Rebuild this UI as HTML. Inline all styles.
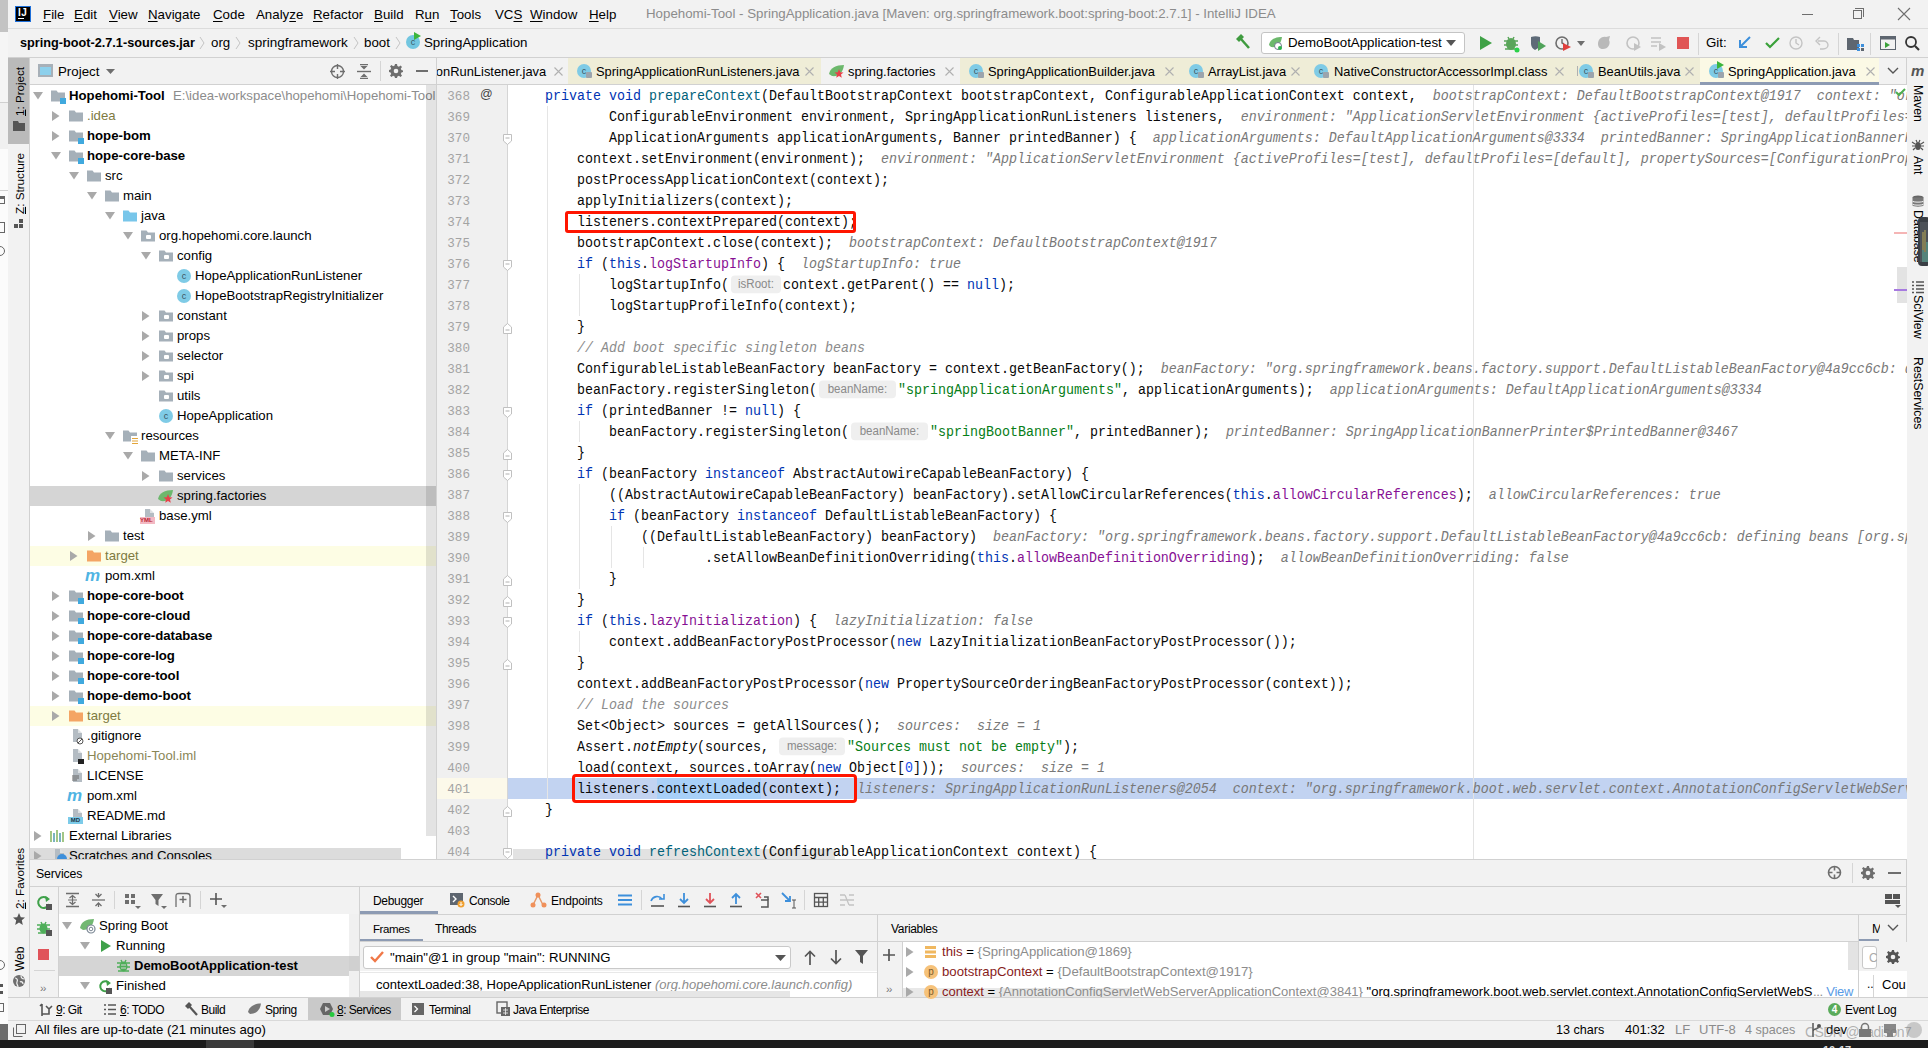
<!DOCTYPE html><html><head><meta charset="utf-8"><style>
*{margin:0;padding:0;box-sizing:border-box}
html,body{width:1928px;height:1048px;overflow:hidden;background:#f2f2f2}
body{position:relative;font-family:"Liberation Sans",sans-serif;font-size:13px;color:#000}
.t{position:absolute;white-space:pre;line-height:20px;height:20px}
.b{font-weight:bold}
.code{position:absolute;left:437px;top:85px;width:1470px;height:774px;overflow:hidden;background:#fff}
.ln{position:absolute;left:0;height:21px;width:1470px;white-space:pre;font-family:"Liberation Mono",monospace;font-size:13.333px;line-height:21px;color:#080808;transform:scaleY(1.1);transform-origin:0 6px}
.kw{color:#0033b3}
.mt{color:#00627a}
.fd{color:#871094}
.st{color:#067d17}
.cm{color:#8c8c8c;font-style:italic}
.nm{color:#1750eb}
.it{font-style:italic}
.hint{color:#787878;font-style:italic}
.inl{display:inline-block;vertical-align:top;height:15.5px;margin-top:2.4px;background:#efefef;border-radius:4px/3.6px;color:#8a8a8a;font-family:"Liberation Sans",sans-serif;font-size:11.5px;line-height:15.5px;font-style:normal;text-align:center}
svg{position:absolute;overflow:visible}
</style></head><body><div style="position:absolute;left:0px;top:0px;width:8px;height:32px;background:#c3c3c3"></div>
<div style="position:absolute;left:0px;top:32px;width:8px;height:1008px;background:#fbfbfb"></div>
<div style="position:absolute;left:0px;top:32px;width:8px;height:70px;background:#f5f5f5"></div>
<div style="position:absolute;left:0px;top:102px;width:8px;height:1px;background:#d0d0d0"></div>
<div style="position:absolute;left:0px;top:103px;width:8px;height:46px;background:#f0f0f0"></div>
<div style="position:absolute;left:0px;top:190px;width:8px;height:1px;background:#d0d0d0"></div>
<div style="position:absolute;left:-4px;top:196px;width:9px;height:8px;border:1.3px solid #666"></div>
<div style="position:absolute;left:-4px;top:197px;width:9px;height:2px;background:#666"></div>
<div style="position:absolute;left:-4px;top:222px;width:9px;height:11px;border:1.3px solid #666"></div>
<div style="position:absolute;left:-5px;top:246px;width:10px;height:10px;border:1.3px solid #666;border-radius:50%"></div>
<div style="position:absolute;left:-5px;top:960px;width:10px;height:10px;border:1.3px solid #666;border-radius:50%"></div>
<div style="position:absolute;left:-3px;top:984px;width:6px;height:3px;background:#555"></div>
<div style="position:absolute;left:-3px;top:991px;width:6px;height:3px;background:#555"></div>
<div style="position:absolute;left:-4px;top:1003px;width:8px;height:9px;border:1.3px solid #666"></div>
<div style="position:absolute;left:0px;top:1024px;width:8px;height:16px;background:#6b6b6b"></div>
<div style="position:absolute;left:8px;top:0px;width:1920px;height:28px;background:#f2f2f2"></div>
<div style="position:absolute;left:8px;top:28px;width:1920px;height:1px;background:#dcdcdc"></div>
<div style="position:absolute;left:8px;top:29px;width:1920px;height:28px;background:#f2f2f2"></div>
<div style="position:absolute;left:8px;top:57px;width:1920px;height:1px;background:#d1d1d1"></div>
<div style="position:absolute;left:8px;top:58px;width:21px;height:939px;background:#f2f2f2"></div>
<div style="position:absolute;left:29px;top:58px;width:1px;height:939px;background:#d1d1d1"></div>
<div style="position:absolute;left:8px;top:58px;width:21px;height:86px;background:#bababa"></div>
<div style="position:absolute;left:30px;top:58px;width:406px;height:26px;background:#f2f2f2"></div>
<div style="position:absolute;left:30px;top:84px;width:406px;height:1px;background:#d1d1d1"></div>
<div style="position:absolute;left:30px;top:85px;width:406px;height:774px;background:#ffffff"></div>
<div style="position:absolute;left:436px;top:58px;width:1px;height:801px;background:#d1d1d1"></div>
<div style="position:absolute;left:437px;top:58px;width:1470px;height:26px;background:#f2f2f2"></div>
<div style="position:absolute;left:437px;top:84px;width:1470px;height:1px;background:#d1d1d1"></div>
<div style="position:absolute;left:1907px;top:58px;width:21px;height:939px;background:#f2f2f2"></div>
<div style="position:absolute;left:1906px;top:58px;width:1px;height:939px;background:#d1d1d1"></div>
<div style="position:absolute;left:30px;top:859px;width:1876px;height:1px;background:#d1d1d1"></div>
<div style="position:absolute;left:30px;top:860px;width:1876px;height:26px;background:#f2f2f2"></div>
<div style="position:absolute;left:30px;top:886px;width:1876px;height:1px;background:#d1d1d1"></div>
<div style="position:absolute;left:8px;top:997px;width:1920px;height:1px;background:#d1d1d1"></div>
<div style="position:absolute;left:8px;top:998px;width:1920px;height:22px;background:#f2f2f2"></div>
<div style="position:absolute;left:8px;top:1020px;width:1920px;height:1px;background:#d9d9d9"></div>
<div style="position:absolute;left:8px;top:1021px;width:1920px;height:19px;background:#f2f2f2"></div>
<div style="position:absolute;left:0px;top:1040px;width:1928px;height:8px;background:#1c1c1c"></div>
<div style="position:absolute;left:206px;top:1040px;width:48px;height:8px;background:#3a3a3a"></div>
<div style="position:absolute;left:15px;top:6px;width:16px;height:16px;background:#000;border:1px solid #1e6fd9"></div>
<div style="position:absolute;left:18px;top:7px;font:bold 10px 'Liberation Sans';color:#fff;line-height:11px;letter-spacing:0.5px">IJ</div>
<div style="position:absolute;left:18px;top:18px;width:6px;height:1px;background:#fff"></div>
<div class="t" style="left:43px;top:5px;font-size:13.3px;color:#000"><u style="text-decoration-thickness:1px;text-underline-offset:2px">F</u>ile</div>
<div class="t" style="left:74px;top:5px;font-size:13.3px;color:#000"><u style="text-decoration-thickness:1px;text-underline-offset:2px">E</u>dit</div>
<div class="t" style="left:109px;top:5px;font-size:13.3px;color:#000"><u style="text-decoration-thickness:1px;text-underline-offset:2px">V</u>iew</div>
<div class="t" style="left:148px;top:5px;font-size:13.3px;color:#000"><u style="text-decoration-thickness:1px;text-underline-offset:2px">N</u>avigate</div>
<div class="t" style="left:213px;top:5px;font-size:13.3px;color:#000"><u style="text-decoration-thickness:1px;text-underline-offset:2px">C</u>ode</div>
<div class="t" style="left:256px;top:5px;font-size:13.3px;color:#000">Analy<u style="text-decoration-thickness:1px;text-underline-offset:2px">z</u>e</div>
<div class="t" style="left:313px;top:5px;font-size:13.3px;color:#000"><u style="text-decoration-thickness:1px;text-underline-offset:2px">R</u>efactor</div>
<div class="t" style="left:374px;top:5px;font-size:13.3px;color:#000"><u style="text-decoration-thickness:1px;text-underline-offset:2px">B</u>uild</div>
<div class="t" style="left:415px;top:5px;font-size:13.3px;color:#000">R<u style="text-decoration-thickness:1px;text-underline-offset:2px">u</u>n</div>
<div class="t" style="left:450px;top:5px;font-size:13.3px;color:#000"><u style="text-decoration-thickness:1px;text-underline-offset:2px">T</u>ools</div>
<div class="t" style="left:495px;top:5px;font-size:13.3px;color:#000">VC<u style="text-decoration-thickness:1px;text-underline-offset:2px">S</u></div>
<div class="t" style="left:530px;top:5px;font-size:13.3px;color:#000"><u style="text-decoration-thickness:1px;text-underline-offset:2px">W</u>indow</div>
<div class="t" style="left:589px;top:5px;font-size:13.3px;color:#000"><u style="text-decoration-thickness:1px;text-underline-offset:2px">H</u>elp</div>
<div class="t" style="left:646px;top:4px;font-size:13.3px;color:#8c8c8c">Hopehomi-Tool - SpringApplication.java [Maven: org.springframework.boot:spring-boot:2.7.1] - IntelliJ IDEA</div>
<div style="position:absolute;left:1802px;top:14px;width:11px;height:1px;background:#6e6e6e"></div>
<div style="position:absolute;left:1853px;top:10px;width:9px;height:9px;border:1px solid #6e6e6e"></div>
<div style="position:absolute;left:1855px;top:8px;width:9px;height:9px;border-top:1px solid #6e6e6e;border-right:1px solid #6e6e6e"></div>
<svg style="left:1898px;top:8px" width="12" height="12"><path d="M0 0L12 12M12 0L0 12" stroke="#6e6e6e" stroke-width="1.1"/></svg>
<div class="t" style="left:20px;top:33px;font-size:12.7px;font-weight:bold;color:#000">spring-boot-2.7.1-sources.jar</div>
<svg style="left:199px;top:36px" width="6" height="14"><path d="M1 1L5 7L1 13" stroke="#c4c4c4" fill="none" stroke-width="1"/></svg>
<div class="t" style="left:211px;top:33px;font-size:13.3px;color:#000">org</div>
<svg style="left:235px;top:36px" width="6" height="14"><path d="M1 1L5 7L1 13" stroke="#c4c4c4" fill="none" stroke-width="1"/></svg>
<div class="t" style="left:248px;top:33px;font-size:13.5px;color:#000">springframework</div>
<svg style="left:353px;top:36px" width="6" height="14"><path d="M1 1L5 7L1 13" stroke="#c4c4c4" fill="none" stroke-width="1"/></svg>
<div class="t" style="left:364px;top:33px;font-size:13.3px;color:#000">boot</div>
<svg style="left:395px;top:36px" width="6" height="14"><path d="M1 1L5 7L1 13" stroke="#c4c4c4" fill="none" stroke-width="1"/></svg>
<div style="position:absolute;left:406px;top:35px;width:14px;height:14px;border-radius:50%;background:#72c6e0;color:#3b5a66;font:9px 'Liberation Sans';line-height:14px;text-align:center">c</div>
<svg style="left:414px;top:32px" width="7" height="8"><path d="M0 0L7 4L0 8Z" fill="#3bb53b"/></svg>
<div class="t" style="left:424px;top:33px;font-size:13.3px;color:#000">SpringApplication</div>
<svg style="left:1234px;top:34px" width="18" height="16"><path d="M2 5L7 0L10 3L5 8Z" fill="#3f9b3f"/><path d="M7 5L15 14" stroke="#3f9b3f" stroke-width="2.5"/></svg>
<div style="position:absolute;left:1261px;top:32px;width:204px;height:22px;background:#fff;border:1px solid #c4c4c4;border-radius:3px"></div>
<svg style="left:1268px;top:36px" width="16" height="14"><path d="M1 9C2 3 8 1 14 1C13 8 9 12 3 11Z" fill="#6cb86c"/><circle cx="10" cy="10" r="3.5" fill="#fff" stroke="#6e7b8b" stroke-width="1"/><circle cx="12" cy="12" r="2" fill="#2bb24c"/></svg>
<div class="t" style="left:1288px;top:33px;font-size:13.3px;color:#000">DemoBootApplication-test</div>
<svg style="left:1446px;top:40px" width="10" height="6"><path d="M0 0L10 0L5 6Z" fill="#555"/></svg>
<svg style="left:1479px;top:36px" width="13" height="14"><path d="M1 0L13 7L1 14Z" fill="#3fa146"/></svg>
<svg style="left:1503px;top:35px" width="17" height="17"><ellipse cx="8" cy="9" rx="5" ry="6" fill="#5aa55a"/><path d="M1 6H15M1 10H15M2 14H14M5 2L6 4M11 2L10 4" stroke="#5aa55a" stroke-width="1.5"/><circle cx="14" cy="15" r="2.5" fill="#2bd14b"/></svg>
<svg style="left:1530px;top:35px" width="17" height="17"><path d="M1 2C4 1 7 1 10 2V9C10 12 7 14 5 15C3 14 1 12 1 9Z" fill="#5e6b78"/><path d="M8 6L16 11L8 16Z" fill="#4fa35a"/></svg>
<svg style="left:1555px;top:35px" width="18" height="17"><circle cx="7" cy="8" r="6" fill="none" stroke="#6e6e6e" stroke-width="1.6"/><path d="M7 4V8L9 9" stroke="#6e6e6e" stroke-width="1.4" fill="none"/><path d="M8 8L16 12L8 16Z" fill="#e0413e"/></svg>
<svg style="left:1577px;top:41px" width="8" height="5"><path d="M0 0L8 0L4 5Z" fill="#6e6e6e"/></svg>
<svg style="left:1596px;top:35px" width="17" height="16"><path d="M2 9C2 4 6 1 10 2L14 1L13 5C15 9 12 14 7 14C4 14 2 12 2 9Z" fill="#b9b9b9"/></svg>
<svg style="left:1626px;top:35px" width="16" height="17"><circle cx="7" cy="8" r="6" fill="none" stroke="#c2c2c2" stroke-width="1.6"/><path d="M8 8L15 12L8 16Z" fill="#c2c2c2"/></svg>
<svg style="left:1650px;top:36px" width="17" height="15"><path d="M1 2H11M1 6H11M1 10H7" stroke="#c2c2c2" stroke-width="1.6"/><path d="M9 7L16 11L9 15Z" fill="#c2c2c2"/></svg>
<div style="position:absolute;left:1677px;top:37px;width:12px;height:12px;background:#e05555"></div>
<div style="position:absolute;left:1698px;top:33px;width:1px;height:22px;background:#d5d5d5"></div>
<div class="t" style="left:1706px;top:33px;font-size:13.3px;color:#000">Git:</div>
<svg style="left:1738px;top:36px" width="13" height="13"><path d="M12 1L2 11M2 4V11H9" stroke="#3d8fdb" stroke-width="2" fill="none"/></svg>
<svg style="left:1765px;top:37px" width="15" height="12"><path d="M1 6L5 10L14 1" stroke="#3aa13a" stroke-width="2.2" fill="none"/></svg>
<svg style="left:1789px;top:36px" width="14" height="14"><circle cx="7" cy="7" r="6" fill="none" stroke="#c4c4c4" stroke-width="1.4"/><path d="M7 3V7L10 9" stroke="#c4c4c4" stroke-width="1.4" fill="none"/></svg>
<svg style="left:1815px;top:36px" width="14" height="14"><path d="M3 5H9C12 5 13 8 13 9C13 11 11 13 8 13H5" stroke="#c4c4c4" stroke-width="1.4" fill="none"/><path d="M5 1L1 5L5 9" stroke="#c4c4c4" stroke-width="1.4" fill="none"/></svg>
<div style="position:absolute;left:1838px;top:33px;width:1px;height:22px;background:#d5d5d5"></div>
<svg style="left:1847px;top:36px" width="17" height="15"><path d="M0 2H6L7 4H12V14H0Z" fill="#5e6670"/><rect x="10" y="8" width="3" height="3" fill="#3d8fdb"/><rect x="14" y="8" width="3" height="3" fill="#3d8fdb"/><rect x="10" y="12" width="3" height="3" fill="#3d8fdb"/><rect x="14" y="12" width="3" height="3" fill="#5e6670"/></svg>
<div style="position:absolute;left:1870px;top:33px;width:1px;height:22px;background:#d5d5d5"></div>
<svg style="left:1880px;top:36px" width="16" height="14"><rect x="0.5" y="0.5" width="15" height="13" fill="none" stroke="#5e6670"/><rect x="0.5" y="0.5" width="15" height="3" fill="#5e6670"/><path d="M5 6L10 9L5 12Z" fill="#3aa13a"/></svg>
<svg style="left:1905px;top:36px" width="15" height="15"><circle cx="6" cy="6" r="5" fill="none" stroke="#333" stroke-width="1.8"/><path d="M10 10L14 14" stroke="#333" stroke-width="2.2"/></svg>
<div style="position:absolute;left:13px;top:116px;transform:rotate(-90deg);transform-origin:0 0;white-space:pre;font-size:11.6px;line-height:14px;color:#000"><u>1</u>: Project</div>
<svg style="left:13px;top:121px" width="12" height="10"><path d="M0 0H5L6 2H12V10H0Z" fill="#555"/></svg>
<div style="position:absolute;left:13px;top:214px;transform:rotate(-90deg);transform-origin:0 0;white-space:pre;font-size:11.7px;line-height:14px;color:#000"><u>Z</u>: Structure</div>
<svg style="left:14px;top:219px" width="10" height="10"><rect x="5" y="0" width="4" height="4" fill="#555"/><rect x="0" y="5" width="4" height="4" fill="#555"/><rect x="5" y="5" width="4" height="4" fill="#555"/></svg>
<div style="position:absolute;left:13px;top:909px;transform:rotate(-90deg);transform-origin:0 0;white-space:pre;font-size:11.7px;line-height:14px;color:#000"><u>2</u>: Favorites</div>
<svg style="left:13px;top:913px" width="12" height="12"><path d="M6 0L7.8 4.2L12 4.5L8.8 7.3L9.8 12L6 9.5L2.2 12L3.2 7.3L0 4.5L4.2 4.2Z" fill="#555"/></svg>
<div style="position:absolute;left:13px;top:971px;transform:rotate(-90deg);transform-origin:0 0;white-space:pre;font-size:12px;line-height:14px;color:#000">Web</div>
<svg style="left:13px;top:975px" width="12" height="12"><circle cx="6" cy="6" r="6" fill="#6e6e6e"/><path d="M2 3C4 3 5 5 4 7C3 9 5 10 5 12M8 0.5C8 2 9 4 11.5 4M7 7C8 6 10 7 10 9" stroke="#f2f2f2" stroke-width="1.2" fill="none"/></svg>
<div style="position:absolute;left:38px;top:64px;width:15px;height:13px;background:#8dd0ec;border:2px solid #a7b0b8;border-top-width:3px"></div>
<div class="t" style="left:58px;top:62px;font-size:13.3px;color:#000">Project</div>
<svg style="left:106px;top:69px" width="9" height="5"><path d="M0 0H9L4.5 5Z" fill="#6e6e6e"/></svg>
<svg style="left:330px;top:64px" width="15" height="15"><circle cx="7.5" cy="7.5" r="6" fill="none" stroke="#6e6e6e" stroke-width="1.4"/><path d="M7.5 0V5M7.5 10V15M0 7.5H5M10 7.5H15" stroke="#6e6e6e" stroke-width="1.4"/></svg>
<svg style="left:357px;top:64px" width="14" height="15"><path d="M0 7.5H14" stroke="#6e6e6e" stroke-width="1.4"/><path d="M3.5 2H10.5L7 5.5Z M3.5 13H10.5L7 9.5Z" fill="#6e6e6e"/><path d="M3 0.7H11M3 14.3H11" stroke="#6e6e6e" stroke-width="1.3"/></svg>
<div style="position:absolute;left:380px;top:61px;width:1px;height:20px;background:#d5d5d5"></div>
<svg style="left:389px;top:64px" width="14" height="14" viewBox="0 0 14 14"><path d="M6 0H8L8.4 2.1L9.9 2.7L11.6 1.5L13 2.9L11.8 4.6L12.4 6.1L14 6.5V8L12.4 8.4L11.8 9.9L13 11.6L11.6 13L9.9 11.8L8.4 12.4L8 14H6L5.6 12.4L4.1 11.8L2.4 13L1 11.6L2.2 9.9L1.6 8.4L0 8V6L1.6 5.6L2.2 4.1L1 2.4L2.4 1L4.1 2.2L5.6 1.6Z" fill="#6e6e6e"/><circle cx="7" cy="7" r="2.3" fill="#f2f2f2"/></svg>
<div style="position:absolute;left:416px;top:70px;width:12px;height:2px;background:#6e6e6e"></div>
<div style="position:absolute;left:30px;top:85px;width:406px;height:774px;overflow:hidden;background:#fff">
<div style="position:absolute;left:0px;top:763px;width:371px;height:11px;background:#dcdcdc"></div>
<svg style="left:3px;top:7px" width="10" height="8"><path d="M0 0H10L5 7.5Z" fill="#a9a9a9"/></svg>
<svg style="left:21px;top:5px" width="17" height="15"><path d="M0 0.5H5.5L7 2.5H14V11.5H0Z" fill="#a5b0b9"/><rect x="9" y="8" width="6" height="6" fill="#40a9de"/></svg>
<div class="t" style="left:39px;top:1px;font-size:13.2px;color:#000;font-weight:bold;font-size:13.2px">Hopehomi-Tool</div>
<div class="t" style="left:143px;top:1px;font-size:13.2px;color:#8c8c8c">E:\idea-workspace\hopehomi\Hopehomi-Tool</div>
<svg style="left:22px;top:26px" width="8" height="10"><path d="M0 0L7.5 5L0 10Z" fill="#a9a9a9"/></svg>
<svg style="left:39px;top:25px" width="17" height="15"><path d="M0 0.5H5.5L7 2.5H14V11.5H0Z" fill="#a5b0b9"/></svg>
<div class="t" style="left:57px;top:21px;font-size:13.2px;color:#7e7a3f">.idea</div>
<svg style="left:22px;top:46px" width="8" height="10"><path d="M0 0L7.5 5L0 10Z" fill="#a9a9a9"/></svg>
<svg style="left:39px;top:45px" width="17" height="15"><path d="M0 0.5H5.5L7 2.5H14V11.5H0Z" fill="#a5b0b9"/><rect x="9" y="8" width="6" height="6" fill="#40a9de"/></svg>
<div class="t" style="left:57px;top:41px;font-size:13.2px;color:#000;font-weight:bold;font-size:13.2px">hope-bom</div>
<svg style="left:21px;top:67px" width="10" height="8"><path d="M0 0H10L5 7.5Z" fill="#a9a9a9"/></svg>
<svg style="left:39px;top:65px" width="17" height="15"><path d="M0 0.5H5.5L7 2.5H14V11.5H0Z" fill="#a5b0b9"/><rect x="9" y="8" width="6" height="6" fill="#40a9de"/></svg>
<div class="t" style="left:57px;top:61px;font-size:13.2px;color:#000;font-weight:bold;font-size:13.2px">hope-core-base</div>
<svg style="left:39px;top:87px" width="10" height="8"><path d="M0 0H10L5 7.5Z" fill="#a9a9a9"/></svg>
<svg style="left:57px;top:85px" width="17" height="15"><path d="M0 0.5H5.5L7 2.5H14V11.5H0Z" fill="#a5b0b9"/></svg>
<div class="t" style="left:75px;top:81px;font-size:13.2px;color:#000">src</div>
<svg style="left:57px;top:107px" width="10" height="8"><path d="M0 0H10L5 7.5Z" fill="#a9a9a9"/></svg>
<svg style="left:75px;top:105px" width="17" height="15"><path d="M0 0.5H5.5L7 2.5H14V11.5H0Z" fill="#a5b0b9"/></svg>
<div class="t" style="left:93px;top:101px;font-size:13.2px;color:#000">main</div>
<svg style="left:75px;top:127px" width="10" height="8"><path d="M0 0H10L5 7.5Z" fill="#a9a9a9"/></svg>
<svg style="left:93px;top:125px" width="17" height="15"><path d="M0 0.5H5.5L7 2.5H14V11.5H0Z" fill="#78c6ea"/></svg>
<div class="t" style="left:111px;top:121px;font-size:13.2px;color:#000">java</div>
<svg style="left:93px;top:147px" width="10" height="8"><path d="M0 0H10L5 7.5Z" fill="#a9a9a9"/></svg>
<svg style="left:111px;top:145px" width="17" height="15"><path d="M0 0.5H5.5L7 2.5H14V11.5H0Z" fill="#a5b0b9"/><rect x="5" y="5" width="5" height="4" rx="1" fill="#fff"/></svg>
<div class="t" style="left:129px;top:141px;font-size:13.2px;color:#000">org.hopehomi.core.launch</div>
<svg style="left:111px;top:167px" width="10" height="8"><path d="M0 0H10L5 7.5Z" fill="#a9a9a9"/></svg>
<svg style="left:129px;top:165px" width="17" height="15"><path d="M0 0.5H5.5L7 2.5H14V11.5H0Z" fill="#a5b0b9"/><rect x="5" y="5" width="5" height="4" rx="1" fill="#fff"/></svg>
<div class="t" style="left:147px;top:161px;font-size:13.2px;color:#000">config</div>
<div style="position:absolute;left:147px;top:184px;width:14px;height:14px;border-radius:50%;background:#7fcbe6;color:#3a5560;font:9px 'Liberation Sans';line-height:14px;text-align:center">c</div>
<div class="t" style="left:165px;top:181px;font-size:13.2px;color:#000">HopeApplicationRunListener</div>
<div style="position:absolute;left:147px;top:204px;width:14px;height:14px;border-radius:50%;background:#7fcbe6;color:#3a5560;font:9px 'Liberation Sans';line-height:14px;text-align:center">c</div>
<div class="t" style="left:165px;top:201px;font-size:13.2px;color:#000">HopeBootstrapRegistryInitializer</div>
<svg style="left:112px;top:226px" width="8" height="10"><path d="M0 0L7.5 5L0 10Z" fill="#a9a9a9"/></svg>
<svg style="left:129px;top:225px" width="17" height="15"><path d="M0 0.5H5.5L7 2.5H14V11.5H0Z" fill="#a5b0b9"/><rect x="5" y="5" width="5" height="4" rx="1" fill="#fff"/></svg>
<div class="t" style="left:147px;top:221px;font-size:13.2px;color:#000">constant</div>
<svg style="left:112px;top:246px" width="8" height="10"><path d="M0 0L7.5 5L0 10Z" fill="#a9a9a9"/></svg>
<svg style="left:129px;top:245px" width="17" height="15"><path d="M0 0.5H5.5L7 2.5H14V11.5H0Z" fill="#a5b0b9"/><rect x="5" y="5" width="5" height="4" rx="1" fill="#fff"/></svg>
<div class="t" style="left:147px;top:241px;font-size:13.2px;color:#000">props</div>
<svg style="left:112px;top:266px" width="8" height="10"><path d="M0 0L7.5 5L0 10Z" fill="#a9a9a9"/></svg>
<svg style="left:129px;top:265px" width="17" height="15"><path d="M0 0.5H5.5L7 2.5H14V11.5H0Z" fill="#a5b0b9"/><rect x="5" y="5" width="5" height="4" rx="1" fill="#fff"/></svg>
<div class="t" style="left:147px;top:261px;font-size:13.2px;color:#000">selector</div>
<svg style="left:112px;top:286px" width="8" height="10"><path d="M0 0L7.5 5L0 10Z" fill="#a9a9a9"/></svg>
<svg style="left:129px;top:285px" width="17" height="15"><path d="M0 0.5H5.5L7 2.5H14V11.5H0Z" fill="#a5b0b9"/><rect x="5" y="5" width="5" height="4" rx="1" fill="#fff"/></svg>
<div class="t" style="left:147px;top:281px;font-size:13.2px;color:#000">spi</div>
<svg style="left:129px;top:305px" width="17" height="15"><path d="M0 0.5H5.5L7 2.5H14V11.5H0Z" fill="#a5b0b9"/><rect x="5" y="5" width="5" height="4" rx="1" fill="#fff"/></svg>
<div class="t" style="left:147px;top:301px;font-size:13.2px;color:#000">utils</div>
<div style="position:absolute;left:129px;top:324px;width:14px;height:14px;border-radius:50%;background:#7fcbe6;color:#3a5560;font:9px 'Liberation Sans';line-height:14px;text-align:center">c</div>
<div class="t" style="left:147px;top:321px;font-size:13.2px;color:#000">HopeApplication</div>
<svg style="left:75px;top:347px" width="10" height="8"><path d="M0 0H10L5 7.5Z" fill="#a9a9a9"/></svg>
<svg style="left:93px;top:345px" width="17" height="15"><path d="M0 0.5H5.5L7 2.5H14V11.5H0Z" fill="#a5b0b9"/><rect x="8" y="6" width="8" height="9" fill="#fff"/><path d="M9 8.5H15M9 11H15M9 13.5H15" stroke="#e3a53a" stroke-width="1.2"/></svg>
<div class="t" style="left:111px;top:341px;font-size:13.2px;color:#000">resources</div>
<svg style="left:93px;top:367px" width="10" height="8"><path d="M0 0H10L5 7.5Z" fill="#a9a9a9"/></svg>
<svg style="left:111px;top:365px" width="17" height="15"><path d="M0 0.5H5.5L7 2.5H14V11.5H0Z" fill="#a5b0b9"/></svg>
<div class="t" style="left:129px;top:361px;font-size:13.2px;color:#000">META-INF</div>
<svg style="left:112px;top:386px" width="8" height="10"><path d="M0 0L7.5 5L0 10Z" fill="#a9a9a9"/></svg>
<svg style="left:129px;top:385px" width="17" height="15"><path d="M0 0.5H5.5L7 2.5H14V11.5H0Z" fill="#a5b0b9"/></svg>
<div class="t" style="left:147px;top:381px;font-size:13.2px;color:#000">services</div>
<div style="position:absolute;left:0px;top:401px;width:406px;height:20px;background:#d5d5d5"></div>
<svg style="left:128px;top:404px" width="16" height="14"><path d="M0 10C1 4 7 1 15 1C14 9 9 13 3 12Z" fill="#6cb86c"/><path d="M10 5L11.2 8.2L14.5 8.4L12 10.5L12.8 13.8L10 12L7.2 13.8L8 10.5L5.5 8.4L8.8 8.2Z" fill="#e8404a"/></svg>
<div class="t" style="left:147px;top:401px;font-size:13.2px;color:#000">spring.factories</div>
<svg style="left:112px;top:423px" width="14" height="16"><path d="M3 1H8V5H12V14H3Z" fill="#b4bcc3"/><path d="M8 1L12 5H8Z" fill="#dde1e4"/></svg>
<div style="position:absolute;left:110px;top:432px;width:15px;height:7px;background:#f3b9c3;color:#b23;font:bold 6px 'Liberation Sans';line-height:7px">YML</div>
<div class="t" style="left:129px;top:421px;font-size:13.2px;color:#000">base.yml</div>
<svg style="left:58px;top:446px" width="8" height="10"><path d="M0 0L7.5 5L0 10Z" fill="#a9a9a9"/></svg>
<svg style="left:75px;top:445px" width="17" height="15"><path d="M0 0.5H5.5L7 2.5H14V11.5H0Z" fill="#a5b0b9"/></svg>
<div class="t" style="left:93px;top:441px;font-size:13.2px;color:#000">test</div>
<div style="position:absolute;left:0px;top:461px;width:406px;height:20px;background:#fdfde4"></div>
<svg style="left:40px;top:466px" width="8" height="10"><path d="M0 0L7.5 5L0 10Z" fill="#a9a9a9"/></svg>
<svg style="left:57px;top:465px" width="17" height="15"><path d="M0 0.5H5.5L7 2.5H14V11.5H0Z" fill="#f4a564"/></svg>
<div class="t" style="left:75px;top:461px;font-size:13.2px;color:#7e7a3f">target</div>
<div style="position:absolute;left:55px;top:481px;font:italic bold 17px 'Liberation Sans';color:#4fb4e3;line-height:20px;letter-spacing:-1px">m</div>
<div class="t" style="left:75px;top:481px;font-size:13.2px;color:#000">pom.xml</div>
<svg style="left:22px;top:506px" width="8" height="10"><path d="M0 0L7.5 5L0 10Z" fill="#a9a9a9"/></svg>
<svg style="left:39px;top:505px" width="17" height="15"><path d="M0 0.5H5.5L7 2.5H14V11.5H0Z" fill="#a5b0b9"/><rect x="9" y="8" width="6" height="6" fill="#40a9de"/></svg>
<div class="t" style="left:57px;top:501px;font-size:13.2px;color:#000;font-weight:bold;font-size:13.2px">hope-core-boot</div>
<svg style="left:22px;top:526px" width="8" height="10"><path d="M0 0L7.5 5L0 10Z" fill="#a9a9a9"/></svg>
<svg style="left:39px;top:525px" width="17" height="15"><path d="M0 0.5H5.5L7 2.5H14V11.5H0Z" fill="#a5b0b9"/><rect x="9" y="8" width="6" height="6" fill="#40a9de"/></svg>
<div class="t" style="left:57px;top:521px;font-size:13.2px;color:#000;font-weight:bold;font-size:13.2px">hope-core-cloud</div>
<svg style="left:22px;top:546px" width="8" height="10"><path d="M0 0L7.5 5L0 10Z" fill="#a9a9a9"/></svg>
<svg style="left:39px;top:545px" width="17" height="15"><path d="M0 0.5H5.5L7 2.5H14V11.5H0Z" fill="#a5b0b9"/><rect x="9" y="8" width="6" height="6" fill="#40a9de"/></svg>
<div class="t" style="left:57px;top:541px;font-size:13.2px;color:#000;font-weight:bold;font-size:13.2px">hope-core-database</div>
<svg style="left:22px;top:566px" width="8" height="10"><path d="M0 0L7.5 5L0 10Z" fill="#a9a9a9"/></svg>
<svg style="left:39px;top:565px" width="17" height="15"><path d="M0 0.5H5.5L7 2.5H14V11.5H0Z" fill="#a5b0b9"/><rect x="9" y="8" width="6" height="6" fill="#40a9de"/></svg>
<div class="t" style="left:57px;top:561px;font-size:13.2px;color:#000;font-weight:bold;font-size:13.2px">hope-core-log</div>
<svg style="left:22px;top:586px" width="8" height="10"><path d="M0 0L7.5 5L0 10Z" fill="#a9a9a9"/></svg>
<svg style="left:39px;top:585px" width="17" height="15"><path d="M0 0.5H5.5L7 2.5H14V11.5H0Z" fill="#a5b0b9"/><rect x="9" y="8" width="6" height="6" fill="#40a9de"/></svg>
<div class="t" style="left:57px;top:581px;font-size:13.2px;color:#000;font-weight:bold;font-size:13.2px">hope-core-tool</div>
<svg style="left:22px;top:606px" width="8" height="10"><path d="M0 0L7.5 5L0 10Z" fill="#a9a9a9"/></svg>
<svg style="left:39px;top:605px" width="17" height="15"><path d="M0 0.5H5.5L7 2.5H14V11.5H0Z" fill="#a5b0b9"/><rect x="9" y="8" width="6" height="6" fill="#40a9de"/></svg>
<div class="t" style="left:57px;top:601px;font-size:13.2px;color:#000;font-weight:bold;font-size:13.2px">hope-demo-boot</div>
<div style="position:absolute;left:0px;top:621px;width:406px;height:20px;background:#fdfde4"></div>
<svg style="left:22px;top:626px" width="8" height="10"><path d="M0 0L7.5 5L0 10Z" fill="#a9a9a9"/></svg>
<svg style="left:39px;top:625px" width="17" height="15"><path d="M0 0.5H5.5L7 2.5H14V11.5H0Z" fill="#f4a564"/></svg>
<div class="t" style="left:57px;top:621px;font-size:13.2px;color:#7e7a3f">target</div>
<svg style="left:40px;top:643px" width="14" height="16"><path d="M3 1H8V5H12V14H3Z" fill="#b4bcc3"/><path d="M8 1L12 5H8Z" fill="#dde1e4"/></svg>
<svg style="left:46px;top:652px" width="8" height="8"><circle cx="4" cy="4" r="3" fill="#fff" stroke="#555" stroke-width="1"/><path d="M2 6L6 2" stroke="#555"/></svg>
<div class="t" style="left:57px;top:641px;font-size:13.2px;color:#000">.gitignore</div>
<svg style="left:40px;top:663px" width="14" height="16"><path d="M3 1H8V5H12V14H3Z" fill="#b4bcc3"/><path d="M8 1L12 5H8Z" fill="#dde1e4"/></svg>
<div style="position:absolute;left:48px;top:674px;width:6px;height:5px;background:#222"></div>
<div class="t" style="left:57px;top:661px;font-size:13.2px;color:#8a8656">Hopehomi-Tool.iml</div>
<svg style="left:40px;top:683px" width="14" height="16"><path d="M3 1H8V5H12V14H3Z" fill="#b4bcc3"/><path d="M8 1L12 5H8Z" fill="#dde1e4"/></svg>
<svg style="left:42px;top:690px" width="7" height="6"><path d="M0 1H7M0 3H7M0 5H5" stroke="#666" stroke-width="1"/></svg>
<div class="t" style="left:57px;top:681px;font-size:13.2px;color:#000">LICENSE</div>
<div style="position:absolute;left:37px;top:701px;font:italic bold 17px 'Liberation Sans';color:#4fb4e3;line-height:20px;letter-spacing:-1px">m</div>
<div class="t" style="left:57px;top:701px;font-size:13.2px;color:#000">pom.xml</div>
<svg style="left:40px;top:723px" width="14" height="16"><path d="M3 1H8V5H12V14H3Z" fill="#b4bcc3"/><path d="M8 1L12 5H8Z" fill="#dde1e4"/></svg>
<div style="position:absolute;left:38px;top:732px;width:15px;height:7px;background:#7ccbe9;color:#234;font:bold 6px 'Liberation Sans';line-height:7px;text-align:center">MD</div>
<div class="t" style="left:57px;top:721px;font-size:13.2px;color:#000">README.md</div>
<svg style="left:4px;top:746px" width="8" height="10"><path d="M0 0L7.5 5L0 10Z" fill="#a9a9a9"/></svg>
<svg style="left:20px;top:745px" width="15" height="12"><path d="M1 1V12M4 3V12M7 0V12M10 3V12M13 2V12" stroke="#8bb868" stroke-width="1.6"/><path d="M4 3V12M10 3V12" stroke="#70aed1" stroke-width="1.6"/></svg>
<div class="t" style="left:39px;top:741px;font-size:13.2px;color:#000">External Libraries</div>
<svg style="left:4px;top:766px" width="8" height="10"><path d="M0 0L7.5 5L0 10Z" fill="#a9a9a9"/></svg>
<svg style="left:22px;top:763px" width="14" height="16"><path d="M3 1H8V5H12V14H3Z" fill="#b4bcc3"/><path d="M8 1L12 5H8Z" fill="#dde1e4"/></svg>
<div style="position:absolute;left:27px;top:769px;width:10px;height:10px;border-radius:50%;background:#3d8fdb"></div>
<div class="t" style="left:39px;top:761px;font-size:13.2px;color:#000">Scratches and Consoles</div>
<div style="position:absolute;left:396px;top:0px;width:10px;height:751px;background:rgba(0,0,0,0.11)"></div>
</div>
<div style="position:absolute;left:437px;top:58px;width:1470px;height:26px;overflow:hidden;">
<div style="position:absolute;left:0px;top:0px;width:131px;height:26px;background:#f2f2f2"></div>
<div class="t" style="left:-4px;top:4px;font-size:12.9px;color:#000">ionRunListener.java</div>
<svg style="left:117px;top:9px" width="9" height="9"><path d="M0.5 0.5L8.5 8.5M8.5 0.5L0.5 8.5" stroke="#b0b0b0" stroke-width="1.1"/></svg>
<div style="position:absolute;left:131px;top:0px;width:253px;height:26px;background:#efedd7"></div>
<div style="position:absolute;left:140px;top:6px;width:14px;height:14px;border-radius:50%;background:#7fcbe6;color:#3a5560;font:9px 'Liberation Sans';line-height:14px;text-align:center">c</div>
<div style="position:absolute;left:149px;top:14px;width:6px;height:6px;background:#9ba4ad;border-radius:1px"></div>
<div class="t" style="left:159px;top:4px;font-size:12.9px;color:#000">SpringApplicationRunListeners.java</div>
<svg style="left:368px;top:9px" width="9" height="9"><path d="M0.5 0.5L8.5 8.5M8.5 0.5L0.5 8.5" stroke="#b0b0b0" stroke-width="1.1"/></svg>
<div style="position:absolute;left:384px;top:0px;width:139px;height:26px;background:#f2f2f2"></div>
<svg style="left:392px;top:6px" width="16" height="14"><path d="M0 10C1 4 7 1 15 1C14 9 9 13 3 12Z" fill="#6cb86c"/><path d="M10 5L11.2 8.2L14.5 8.4L12 10.5L12.8 13.8L10 12L7.2 13.8L8 10.5L5.5 8.4L8.8 8.2Z" fill="#e8404a"/></svg>
<div class="t" style="left:411px;top:4px;font-size:12.9px;color:#000">spring.factories</div>
<svg style="left:508px;top:9px" width="9" height="9"><path d="M0.5 0.5L8.5 8.5M8.5 0.5L0.5 8.5" stroke="#b0b0b0" stroke-width="1.1"/></svg>
<div style="position:absolute;left:523px;top:0px;width:220px;height:26px;background:#efedd7"></div>
<div style="position:absolute;left:532px;top:6px;width:14px;height:14px;border-radius:50%;background:#7fcbe6;color:#3a5560;font:9px 'Liberation Sans';line-height:14px;text-align:center">c</div>
<div style="position:absolute;left:541px;top:14px;width:6px;height:6px;background:#9ba4ad;border-radius:1px"></div>
<div class="t" style="left:551px;top:4px;font-size:12.9px;color:#000">SpringApplicationBuilder.java</div>
<svg style="left:728px;top:9px" width="9" height="9"><path d="M0.5 0.5L8.5 8.5M8.5 0.5L0.5 8.5" stroke="#b0b0b0" stroke-width="1.1"/></svg>
<div style="position:absolute;left:743px;top:0px;width:125px;height:26px;background:#efedd7"></div>
<div style="position:absolute;left:752px;top:6px;width:14px;height:14px;border-radius:50%;background:#7fcbe6;color:#3a5560;font:9px 'Liberation Sans';line-height:14px;text-align:center">c</div>
<div style="position:absolute;left:761px;top:14px;width:6px;height:6px;background:#9ba4ad;border-radius:1px"></div>
<div class="t" style="left:771px;top:4px;font-size:12.9px;color:#000">ArrayList.java</div>
<svg style="left:854px;top:9px" width="9" height="9"><path d="M0.5 0.5L8.5 8.5M8.5 0.5L0.5 8.5" stroke="#b0b0b0" stroke-width="1.1"/></svg>
<div style="position:absolute;left:868px;top:0px;width:265px;height:26px;background:#efedd7"></div>
<div style="position:absolute;left:877px;top:6px;width:14px;height:14px;border-radius:50%;background:#7fcbe6;color:#3a5560;font:9px 'Liberation Sans';line-height:14px;text-align:center">c</div>
<div style="position:absolute;left:886px;top:14px;width:6px;height:6px;background:#9ba4ad;border-radius:1px"></div>
<div class="t" style="left:897px;top:4px;font-size:12.9px;color:#000">NativeConstructorAccessorImpl.class</div>
<svg style="left:1118px;top:9px" width="9" height="9"><path d="M0.5 0.5L8.5 8.5M8.5 0.5L0.5 8.5" stroke="#b0b0b0" stroke-width="1.1"/></svg>
<div style="position:absolute;left:1133px;top:0px;width:130px;height:26px;background:#efedd7"></div>
<div style="position:absolute;left:1142px;top:6px;width:14px;height:14px;border-radius:50%;background:#7fcbe6;color:#3a5560;font:9px 'Liberation Sans';line-height:14px;text-align:center">c</div>
<div style="position:absolute;left:1151px;top:14px;width:6px;height:6px;background:#9ba4ad;border-radius:1px"></div>
<div style="position:absolute;left:1140px;top:8px;width:1px;height:10px;background:#b0b0b0"></div>
<div class="t" style="left:1161px;top:4px;font-size:12.9px;color:#000">BeanUtils.java</div>
<svg style="left:1248px;top:9px" width="9" height="9"><path d="M0.5 0.5L8.5 8.5M8.5 0.5L0.5 8.5" stroke="#b0b0b0" stroke-width="1.1"/></svg>
<div style="position:absolute;left:1263px;top:0px;width:179px;height:26px;background:#fbf9e5"></div>
<div style="position:absolute;left:1272px;top:6px;width:14px;height:14px;border-radius:50%;background:#7fcbe6;color:#3a5560;font:9px 'Liberation Sans';line-height:14px;text-align:center">c</div>
<div style="position:absolute;left:1281px;top:14px;width:6px;height:6px;background:#9ba4ad;border-radius:1px"></div>
<svg style="left:1280px;top:3px" width="7" height="8"><path d="M0 0L7 4L0 8Z" fill="#3bb53b"/></svg>
<div class="t" style="left:1291px;top:4px;font-size:12.9px;color:#000">SpringApplication.java</div>
<svg style="left:1429px;top:9px" width="9" height="9"><path d="M0.5 0.5L8.5 8.5M8.5 0.5L0.5 8.5" stroke="#b0b0b0" stroke-width="1.1"/></svg>
<svg style="left:1450px;top:9px" width="12" height="8"><path d="M1 1L6 6L11 1" stroke="#555" stroke-width="1.4" fill="none"/></svg>
</div>
<div style="position:absolute;left:1700px;top:82px;width:179px;height:3px;background:#8d9bb3"></div>
<div style="position:absolute;left:437px;top:85px;width:1470px;height:774px;overflow:hidden;background:#fff">
<div style="position:absolute;left:0px;top:0px;width:70px;height:774px;background:#f0f0f0"></div>
<div style="position:absolute;left:70px;top:0px;width:1px;height:774px;background:#d5d5d5"></div>
<div style="position:absolute;left:0px;top:693px;width:70px;height:21px;background:#fcf9ea"></div>
<div style="position:absolute;left:71px;top:693px;width:1399px;height:21px;background:#c2d3f1"></div>
<div style="position:absolute;left:220px;top:693px;width:104px;height:21px;background:#a8d0f8"></div>
<div style="position:absolute;left:1036px;top:0px;width:1px;height:774px;background:#e3e3e3"></div>
<div style="position:absolute;left:76px;top:764px;width:322px;height:10px;background:#e2e2e2"></div>
<div style="position:absolute;left:110px;top:21px;width:1px;height:693px;background:#e5e5e5"></div>
<div style="position:absolute;left:142px;top:189px;width:1px;height:42px;background:#e5e5e5"></div>
<div style="position:absolute;left:142px;top:336px;width:1px;height:21px;background:#e5e5e5"></div>
<div style="position:absolute;left:142px;top:399px;width:1px;height:105px;background:#e5e5e5"></div>
<div style="position:absolute;left:174px;top:441px;width:1px;height:42px;background:#e5e5e5"></div>
<div style="position:absolute;left:206px;top:462px;width:1px;height:21px;background:#e5e5e5"></div>
<div style="position:absolute;left:142px;top:546px;width:1px;height:21px;background:#e5e5e5"></div>
<div class="t" style="left:0px;top:2px;font-family:'Liberation Mono',monospace;font-size:12.6px;line-height:21px;height:21px;color:#a3a3a3;width:33px;text-align:right">368</div>
<div class="ln" style="left:76px;top:0px">    <span class="kw">private</span> <span class="kw">void</span> <span class="mt">prepareContext</span>(DefaultBootstrapContext bootstrapContext, ConfigurableApplicationContext context,  <span class="hint">bootstrapContext: DefaultBootstrapContext@1917  context: "org.springframework.boot.web.servlet.context.AnnotationConfigServletWebServerApplicationContext@4e1d8c8d"</span></div>
<div class="t" style="left:0px;top:23px;font-family:'Liberation Mono',monospace;font-size:12.6px;line-height:21px;height:21px;color:#a3a3a3;width:33px;text-align:right">369</div>
<div class="ln" style="left:76px;top:21px">            ConfigurableEnvironment environment, SpringApplicationRunListeners listeners,  <span class="hint">environment: "ApplicationServletEnvironment {activeProfiles=[test], defaultProfiles=[default], propertySources=[ConfigurationPropertySourcesPropertySource"</span></div>
<div class="t" style="left:0px;top:44px;font-family:'Liberation Mono',monospace;font-size:12.6px;line-height:21px;height:21px;color:#a3a3a3;width:33px;text-align:right">370</div>
<div class="ln" style="left:76px;top:42px">            ApplicationArguments applicationArguments, Banner printedBanner) {  <span class="hint">applicationArguments: DefaultApplicationArguments@3334  printedBanner: SpringApplicationBannerPrinter$PrintedBanner@3467</span></div>
<div class="t" style="left:0px;top:65px;font-family:'Liberation Mono',monospace;font-size:12.6px;line-height:21px;height:21px;color:#a3a3a3;width:33px;text-align:right">371</div>
<div class="ln" style="left:76px;top:63px">        context.setEnvironment(environment);  <span class="hint">environment: "ApplicationServletEnvironment {activeProfiles=[test], defaultProfiles=[default], propertySources=[ConfigurationPropertySourcesPropertySource {name='configurationProperties'}"</span></div>
<div class="t" style="left:0px;top:86px;font-family:'Liberation Mono',monospace;font-size:12.6px;line-height:21px;height:21px;color:#a3a3a3;width:33px;text-align:right">372</div>
<div class="ln" style="left:76px;top:84px">        postProcessApplicationContext(context);</div>
<div class="t" style="left:0px;top:107px;font-family:'Liberation Mono',monospace;font-size:12.6px;line-height:21px;height:21px;color:#a3a3a3;width:33px;text-align:right">373</div>
<div class="ln" style="left:76px;top:105px">        applyInitializers(context);</div>
<div class="t" style="left:0px;top:128px;font-family:'Liberation Mono',monospace;font-size:12.6px;line-height:21px;height:21px;color:#a3a3a3;width:33px;text-align:right">374</div>
<div class="ln" style="left:76px;top:126px">        listeners.contextPrepared(context);</div>
<div class="t" style="left:0px;top:149px;font-family:'Liberation Mono',monospace;font-size:12.6px;line-height:21px;height:21px;color:#a3a3a3;width:33px;text-align:right">375</div>
<div class="ln" style="left:76px;top:147px">        bootstrapContext.close(context);  <span class="hint">bootstrapContext: DefaultBootstrapContext@1917</span></div>
<div class="t" style="left:0px;top:170px;font-family:'Liberation Mono',monospace;font-size:12.6px;line-height:21px;height:21px;color:#a3a3a3;width:33px;text-align:right">376</div>
<div class="ln" style="left:76px;top:168px">        <span class="kw">if</span> (<span class="kw">this</span>.<span class="fd">logStartupInfo</span>) {  <span class="hint">logStartupInfo: true</span></div>
<div class="t" style="left:0px;top:191px;font-family:'Liberation Mono',monospace;font-size:12.6px;line-height:21px;height:21px;color:#a3a3a3;width:33px;text-align:right">377</div>
<div class="ln" style="left:76px;top:189px">            logStartupInfo(<span class="inl" style="width:50px;margin-left:2px;margin-right:2px">isRoot:</span>context.getParent() == <span class="kw">null</span>);</div>
<div class="t" style="left:0px;top:212px;font-family:'Liberation Mono',monospace;font-size:12.6px;line-height:21px;height:21px;color:#a3a3a3;width:33px;text-align:right">378</div>
<div class="ln" style="left:76px;top:210px">            logStartupProfileInfo(context);</div>
<div class="t" style="left:0px;top:233px;font-family:'Liberation Mono',monospace;font-size:12.6px;line-height:21px;height:21px;color:#a3a3a3;width:33px;text-align:right">379</div>
<div class="ln" style="left:76px;top:231px">        }</div>
<div class="t" style="left:0px;top:254px;font-family:'Liberation Mono',monospace;font-size:12.6px;line-height:21px;height:21px;color:#a3a3a3;width:33px;text-align:right">380</div>
<div class="ln" style="left:76px;top:252px">        <span class="cm">// Add boot specific singleton beans</span></div>
<div class="t" style="left:0px;top:275px;font-family:'Liberation Mono',monospace;font-size:12.6px;line-height:21px;height:21px;color:#a3a3a3;width:33px;text-align:right">381</div>
<div class="ln" style="left:76px;top:273px">        ConfigurableListableBeanFactory beanFactory = context.getBeanFactory();  <span class="hint">beanFactory: "org.springframework.beans.factory.support.DefaultListableBeanFactory@4a9cc6cb: defining beans [org.springframework.context.annotation.internalConfigurationAnnotationProcessor"</span></div>
<div class="t" style="left:0px;top:296px;font-family:'Liberation Mono',monospace;font-size:12.6px;line-height:21px;height:21px;color:#a3a3a3;width:33px;text-align:right">382</div>
<div class="ln" style="left:76px;top:294px">        beanFactory.registerSingleton(<span class="inl" style="width:77px;margin-left:2px;margin-right:2px">beanName:</span><span class="st">"springApplicationArguments"</span>, applicationArguments);  <span class="hint">applicationArguments: DefaultApplicationArguments@3334</span></div>
<div class="t" style="left:0px;top:317px;font-family:'Liberation Mono',monospace;font-size:12.6px;line-height:21px;height:21px;color:#a3a3a3;width:33px;text-align:right">383</div>
<div class="ln" style="left:76px;top:315px">        <span class="kw">if</span> (printedBanner != <span class="kw">null</span>) {</div>
<div class="t" style="left:0px;top:338px;font-family:'Liberation Mono',monospace;font-size:12.6px;line-height:21px;height:21px;color:#a3a3a3;width:33px;text-align:right">384</div>
<div class="ln" style="left:76px;top:336px">            beanFactory.registerSingleton(<span class="inl" style="width:77px;margin-left:2px;margin-right:2px">beanName:</span><span class="st">"springBootBanner"</span>, printedBanner);  <span class="hint">printedBanner: SpringApplicationBannerPrinter$PrintedBanner@3467</span></div>
<div class="t" style="left:0px;top:359px;font-family:'Liberation Mono',monospace;font-size:12.6px;line-height:21px;height:21px;color:#a3a3a3;width:33px;text-align:right">385</div>
<div class="ln" style="left:76px;top:357px">        }</div>
<div class="t" style="left:0px;top:380px;font-family:'Liberation Mono',monospace;font-size:12.6px;line-height:21px;height:21px;color:#a3a3a3;width:33px;text-align:right">386</div>
<div class="ln" style="left:76px;top:378px">        <span class="kw">if</span> (beanFactory <span class="kw">instanceof</span> AbstractAutowireCapableBeanFactory) {</div>
<div class="t" style="left:0px;top:401px;font-family:'Liberation Mono',monospace;font-size:12.6px;line-height:21px;height:21px;color:#a3a3a3;width:33px;text-align:right">387</div>
<div class="ln" style="left:76px;top:399px">            ((AbstractAutowireCapableBeanFactory) beanFactory).setAllowCircularReferences(<span class="kw">this</span>.<span class="fd">allowCircularReferences</span>);  <span class="hint">allowCircularReferences: true</span></div>
<div class="t" style="left:0px;top:422px;font-family:'Liberation Mono',monospace;font-size:12.6px;line-height:21px;height:21px;color:#a3a3a3;width:33px;text-align:right">388</div>
<div class="ln" style="left:76px;top:420px">            <span class="kw">if</span> (beanFactory <span class="kw">instanceof</span> DefaultListableBeanFactory) {</div>
<div class="t" style="left:0px;top:443px;font-family:'Liberation Mono',monospace;font-size:12.6px;line-height:21px;height:21px;color:#a3a3a3;width:33px;text-align:right">389</div>
<div class="ln" style="left:76px;top:441px">                ((DefaultListableBeanFactory) beanFactory)  <span class="hint">beanFactory: "org.springframework.beans.factory.support.DefaultListableBeanFactory@4a9cc6cb: defining beans [org.springframework.context.annotation"</span></div>
<div class="t" style="left:0px;top:464px;font-family:'Liberation Mono',monospace;font-size:12.6px;line-height:21px;height:21px;color:#a3a3a3;width:33px;text-align:right">390</div>
<div class="ln" style="left:76px;top:462px">                        .setAllowBeanDefinitionOverriding(<span class="kw">this</span>.<span class="fd">allowBeanDefinitionOverriding</span>);  <span class="hint">allowBeanDefinitionOverriding: false</span></div>
<div class="t" style="left:0px;top:485px;font-family:'Liberation Mono',monospace;font-size:12.6px;line-height:21px;height:21px;color:#a3a3a3;width:33px;text-align:right">391</div>
<div class="ln" style="left:76px;top:483px">            }</div>
<div class="t" style="left:0px;top:506px;font-family:'Liberation Mono',monospace;font-size:12.6px;line-height:21px;height:21px;color:#a3a3a3;width:33px;text-align:right">392</div>
<div class="ln" style="left:76px;top:504px">        }</div>
<div class="t" style="left:0px;top:527px;font-family:'Liberation Mono',monospace;font-size:12.6px;line-height:21px;height:21px;color:#a3a3a3;width:33px;text-align:right">393</div>
<div class="ln" style="left:76px;top:525px">        <span class="kw">if</span> (<span class="kw">this</span>.<span class="fd">lazyInitialization</span>) {  <span class="hint">lazyInitialization: false</span></div>
<div class="t" style="left:0px;top:548px;font-family:'Liberation Mono',monospace;font-size:12.6px;line-height:21px;height:21px;color:#a3a3a3;width:33px;text-align:right">394</div>
<div class="ln" style="left:76px;top:546px">            context.addBeanFactoryPostProcessor(<span class="kw">new</span> LazyInitializationBeanFactoryPostProcessor());</div>
<div class="t" style="left:0px;top:569px;font-family:'Liberation Mono',monospace;font-size:12.6px;line-height:21px;height:21px;color:#a3a3a3;width:33px;text-align:right">395</div>
<div class="ln" style="left:76px;top:567px">        }</div>
<div class="t" style="left:0px;top:590px;font-family:'Liberation Mono',monospace;font-size:12.6px;line-height:21px;height:21px;color:#a3a3a3;width:33px;text-align:right">396</div>
<div class="ln" style="left:76px;top:588px">        context.addBeanFactoryPostProcessor(<span class="kw">new</span> PropertySourceOrderingBeanFactoryPostProcessor(context));</div>
<div class="t" style="left:0px;top:611px;font-family:'Liberation Mono',monospace;font-size:12.6px;line-height:21px;height:21px;color:#a3a3a3;width:33px;text-align:right">397</div>
<div class="ln" style="left:76px;top:609px">        <span class="cm">// Load the sources</span></div>
<div class="t" style="left:0px;top:632px;font-family:'Liberation Mono',monospace;font-size:12.6px;line-height:21px;height:21px;color:#a3a3a3;width:33px;text-align:right">398</div>
<div class="ln" style="left:76px;top:630px">        Set&lt;Object&gt; sources = getAllSources();  <span class="hint">sources:  size = 1</span></div>
<div class="t" style="left:0px;top:653px;font-family:'Liberation Mono',monospace;font-size:12.6px;line-height:21px;height:21px;color:#a3a3a3;width:33px;text-align:right">399</div>
<div class="ln" style="left:76px;top:651px">        Assert.<span class="it">notEmpty</span>(sources, <span class="inl" style="width:66px;margin-left:2px;margin-right:2px">message:</span><span class="st">"Sources must not be empty"</span>);</div>
<div class="t" style="left:0px;top:674px;font-family:'Liberation Mono',monospace;font-size:12.6px;line-height:21px;height:21px;color:#a3a3a3;width:33px;text-align:right">400</div>
<div class="ln" style="left:76px;top:672px">        load(context, sources.toArray(<span class="kw">new</span> Object[<span class="nm">0</span>]));  <span class="hint">sources:  size = 1</span></div>
<div class="t" style="left:0px;top:695px;font-family:'Liberation Mono',monospace;font-size:12.6px;line-height:21px;height:21px;color:#a3a3a3;width:33px;text-align:right">401</div>
<div class="ln" style="left:76px;top:693px">        listeners.contextLoaded(context);  <span class="hint">listeners: SpringApplicationRunListeners@2054  context: "org.springframework.boot.web.servlet.context.AnnotationConfigServletWebServerApplicationContext@4e1d8c8d"</span></div>
<div class="t" style="left:0px;top:716px;font-family:'Liberation Mono',monospace;font-size:12.6px;line-height:21px;height:21px;color:#a3a3a3;width:33px;text-align:right">402</div>
<div class="ln" style="left:76px;top:714px">    }</div>
<div class="t" style="left:0px;top:737px;font-family:'Liberation Mono',monospace;font-size:12.6px;line-height:21px;height:21px;color:#a3a3a3;width:33px;text-align:right">403</div>
<div class="ln" style="left:76px;top:735px"></div>
<div class="t" style="left:0px;top:758px;font-family:'Liberation Mono',monospace;font-size:12.6px;line-height:21px;height:21px;color:#a3a3a3;width:33px;text-align:right">404</div>
<div class="ln" style="left:76px;top:756px">    <span class="kw">private</span> <span class="kw">void</span> <span class="mt">refreshContext</span>(ConfigurableApplicationContext context) {</div>
<div class="t" style="left:43px;top:-1px;font-size:12.5px;line-height:21px;height:21px;color:#444">@</div>
<svg style="left:66px;top:49px" width="9" height="11"><path d="M0.5 0.5H8.5V7L4.5 10.5L0.5 7Z" fill="#fff" stroke="#c0c0c0"/><path d="M2.5 4H6.5" stroke="#b0b0b0"/></svg>
<svg style="left:66px;top:175px" width="9" height="11"><path d="M0.5 0.5H8.5V7L4.5 10.5L0.5 7Z" fill="#fff" stroke="#c0c0c0"/><path d="M2.5 4H6.5" stroke="#b0b0b0"/></svg>
<svg style="left:66px;top:238px" width="9" height="11"><path d="M0.5 10.5H8.5V4L4.5 0.5L0.5 4Z" fill="#fff" stroke="#c0c0c0"/><path d="M2.5 7H6.5" stroke="#b0b0b0"/></svg>
<svg style="left:66px;top:322px" width="9" height="11"><path d="M0.5 0.5H8.5V7L4.5 10.5L0.5 7Z" fill="#fff" stroke="#c0c0c0"/><path d="M2.5 4H6.5" stroke="#b0b0b0"/></svg>
<svg style="left:66px;top:364px" width="9" height="11"><path d="M0.5 10.5H8.5V4L4.5 0.5L0.5 4Z" fill="#fff" stroke="#c0c0c0"/><path d="M2.5 7H6.5" stroke="#b0b0b0"/></svg>
<svg style="left:66px;top:385px" width="9" height="11"><path d="M0.5 0.5H8.5V7L4.5 10.5L0.5 7Z" fill="#fff" stroke="#c0c0c0"/><path d="M2.5 4H6.5" stroke="#b0b0b0"/></svg>
<svg style="left:66px;top:427px" width="9" height="11"><path d="M0.5 0.5H8.5V7L4.5 10.5L0.5 7Z" fill="#fff" stroke="#c0c0c0"/><path d="M2.5 4H6.5" stroke="#b0b0b0"/></svg>
<svg style="left:66px;top:490px" width="9" height="11"><path d="M0.5 10.5H8.5V4L4.5 0.5L0.5 4Z" fill="#fff" stroke="#c0c0c0"/><path d="M2.5 7H6.5" stroke="#b0b0b0"/></svg>
<svg style="left:66px;top:511px" width="9" height="11"><path d="M0.5 10.5H8.5V4L4.5 0.5L0.5 4Z" fill="#fff" stroke="#c0c0c0"/><path d="M2.5 7H6.5" stroke="#b0b0b0"/></svg>
<svg style="left:66px;top:532px" width="9" height="11"><path d="M0.5 0.5H8.5V7L4.5 10.5L0.5 7Z" fill="#fff" stroke="#c0c0c0"/><path d="M2.5 4H6.5" stroke="#b0b0b0"/></svg>
<svg style="left:66px;top:574px" width="9" height="11"><path d="M0.5 10.5H8.5V4L4.5 0.5L0.5 4Z" fill="#fff" stroke="#c0c0c0"/><path d="M2.5 7H6.5" stroke="#b0b0b0"/></svg>
<svg style="left:66px;top:721px" width="9" height="11"><path d="M0.5 10.5H8.5V4L4.5 0.5L0.5 4Z" fill="#fff" stroke="#c0c0c0"/><path d="M2.5 7H6.5" stroke="#b0b0b0"/></svg>
<svg style="left:66px;top:763px" width="9" height="11"><path d="M0.5 0.5H8.5V7L4.5 10.5L0.5 7Z" fill="#fff" stroke="#c0c0c0"/><path d="M2.5 4H6.5" stroke="#b0b0b0"/></svg>
</div>
<div style="position:absolute;left:565px;top:211px;width:291px;height:22px;border:3px solid #ff1500;border-radius:3px"></div>
<div style="position:absolute;left:572px;top:774px;width:285px;height:29px;border:3px solid #ff1500;border-radius:4px"></div>
<svg style="left:1895px;top:88px" width="11" height="9"><path d="M1 4L4 7L10 1" stroke="#4fae4f" stroke-width="2" fill="none"/></svg>
<div style="position:absolute;left:1894px;top:232px;width:13px;height:2px;background:#f5b5b5"></div>
<div style="position:absolute;left:1897px;top:267px;width:10px;height:36px;background:#e3e3e3"></div>
<div style="position:absolute;left:1894px;top:289px;width:13px;height:2px;background:#a77ae0"></div>
<div style="position:absolute;left:1911px;top:62px;font:italic bold 15px 'Liberation Sans';color:#555;line-height:18px">m</div>
<div style="position:absolute;left:1925px;top:85px;transform:rotate(90deg);transform-origin:0 0;white-space:pre;font-size:12.3px;line-height:14px;color:#000">Maven</div>
<svg style="left:1912px;top:139px" width="12" height="12"><ellipse cx="6" cy="7" rx="3" ry="4" fill="#555"/><path d="M0 3L3 5M12 3L9 5M0 7H3M12 7H9M1 11L3 9M11 11L9 9M4 1L5 3M8 1L7 3" stroke="#555" stroke-width="1.2"/></svg>
<div style="position:absolute;left:1925px;top:156px;transform:rotate(90deg);transform-origin:0 0;white-space:pre;font-size:12.3px;line-height:14px;color:#000">Ant</div>
<svg style="left:1912px;top:195px" width="12" height="13"><ellipse cx="6" cy="2.5" rx="5.5" ry="2" fill="#666"/><path d="M0.5 2.5V10.5C0.5 12 11.5 12 11.5 10.5V2.5" fill="#777"/><path d="M0.5 6C0.5 7.5 11.5 7.5 11.5 6M0.5 9C0.5 10.5 11.5 10.5 11.5 9" stroke="#f2f2f2" fill="none"/></svg>
<div style="position:absolute;left:1925px;top:210px;transform:rotate(90deg);transform-origin:0 0;white-space:pre;font-size:12.3px;line-height:14px;color:#000">Database</div>
<div style="position:absolute;left:1918px;top:217px;width:12px;height:49px;background:#3a3f45;border-radius:4px"></div>
<svg style="left:1920px;top:222px" width="8" height="40"><path d="M1 0V40M3 0V40M5 0V40M7 0V40" stroke="#6a7076" stroke-width="0.8"/><path d="M3 10V28M5 8V30" stroke="#d8c050" stroke-width="0.8"/><path d="M3 28V40M5 30V40M7 20V40" stroke="#5fcfb0" stroke-width="0.8"/></svg>
<svg style="left:1912px;top:281px" width="12" height="12"><path d="M0 1H2M4 1H12M0 4.5H2M4 4.5H12M0 8H2M4 8H12M0 11.5H2M4 11.5H12" stroke="#555" stroke-width="1.6"/></svg>
<div style="position:absolute;left:1925px;top:295px;transform:rotate(90deg);transform-origin:0 0;white-space:pre;font-size:12.3px;line-height:14px;color:#000">SciView</div>
<div style="position:absolute;left:1925px;top:357px;transform:rotate(90deg);transform-origin:0 0;white-space:pre;font-size:12.3px;line-height:14px;color:#000">RestServices</div>
<div class="t" style="left:36px;top:864px;font-size:12.3px;letter-spacing:-0.1px;color:#000">Services</div>
<svg style="left:1827px;top:865px" width="15" height="15"><circle cx="7.5" cy="7.5" r="6" fill="none" stroke="#6e6e6e" stroke-width="1.6"/><path d="M7.5 1V5.5M7.5 9.5V14M1 7.5H5.5M9.5 7.5H14" stroke="#6e6e6e" stroke-width="1.6"/></svg>
<div style="position:absolute;left:1852px;top:863px;width:1px;height:20px;background:#d5d5d5"></div>
<svg style="left:1861px;top:866px" width="14" height="14" viewBox="0 0 14 14"><path d="M6 0H8L8.4 2.1L9.9 2.7L11.6 1.5L13 2.9L11.8 4.6L12.4 6.1L14 6.5V8L12.4 8.4L11.8 9.9L13 11.6L11.6 13L9.9 11.8L8.4 12.4L8 14H6L5.6 12.4L4.1 11.8L2.4 13L1 11.6L2.2 9.9L1.6 8.4L0 8V6L1.6 5.6L2.2 4.1L1 2.4L2.4 1L4.1 2.2L5.6 1.6Z" fill="#6e6e6e"/><circle cx="7" cy="7" r="2.3" fill="#f2f2f2"/></svg>
<div style="position:absolute;left:1888px;top:872px;width:13px;height:2px;background:#6e6e6e"></div>
<div style="position:absolute;left:58px;top:887px;width:1px;height:110px;background:#d1d1d1"></div>
<svg style="left:37px;top:895px" width="15" height="15"><path d="M11 4A5.5 5.5 0 1 0 12 9" stroke="#3fa14a" stroke-width="2" fill="none"/><path d="M8 1L13 4L9 7Z" fill="#3fa14a"/><rect x="9" y="9" width="6" height="6" fill="#555"/></svg>
<svg style="left:37px;top:921px" width="15" height="15"><ellipse cx="6.5" cy="7.5" rx="4" ry="5" fill="#4fae5a"/><path d="M0 4H13M0 8H13M1 12H11M4 1L5 3M9 1L8 3" stroke="#4fae5a" stroke-width="1.5"/><rect x="9" y="9" width="6" height="6" fill="#555"/></svg>
<div style="position:absolute;left:38px;top:949px;width:11px;height:11px;background:#e0535a"></div>
<div style="position:absolute;left:34px;top:970px;width:21px;height:1px;background:#d5d5d5"></div>
<div class="t" style="left:40px;top:978px;font-size:11px;letter-spacing:-1px;color:#777">››</div>
<svg style="left:66px;top:893px" width="13" height="14"><path d="M0 0.5H13M0 13.5H13" stroke="#6e6e6e" stroke-width="1.3"/><path d="M3.5 5L6.5 2.5L9.5 5M3.5 9L6.5 11.5L9.5 9M6.5 3V11" stroke="#6e6e6e" stroke-width="1.3" fill="none"/><path d="M2 7H11" stroke="#6e6e6e"/></svg>
<svg style="left:92px;top:893px" width="13" height="14"><path d="M0 7H13" stroke="#6e6e6e" stroke-width="1.3"/><path d="M3.5 1L6.5 4L9.5 1M3.5 13L6.5 10L9.5 13M6.5 0V4M6.5 10V14" stroke="#6e6e6e" stroke-width="1.3" fill="none"/></svg>
<div style="position:absolute;left:114px;top:891px;width:1px;height:18px;background:#d5d5d5"></div>
<svg style="left:125px;top:894px" width="16" height="15"><rect x="0" y="0" width="4" height="4" fill="#6e6e6e"/><rect x="6" y="0" width="4" height="4" fill="#6e6e6e"/><rect x="0" y="6" width="4" height="4" fill="#6e6e6e"/><rect x="6" y="6" width="4" height="4" fill="#6e6e6e"/><path d="M10 12H16L13 15Z" fill="#6e6e6e"/></svg>
<svg style="left:151px;top:894px" width="16" height="15"><path d="M0 0H12L7.5 6V12L4.5 10V6Z" fill="#6e6e6e"/><path d="M10 12H16L13 15Z" fill="#6e6e6e"/></svg>
<svg style="left:175px;top:893px" width="16" height="14"><path d="M1 14V3C1 1 2 0.5 4 0.5H12C14 0.5 15 1 15 3V14" stroke="#6e6e6e" stroke-width="1.3" fill="none"/><path d="M8 3V10M4.5 6.5H11.5" stroke="#6e6e6e" stroke-width="1.5"/></svg>
<div style="position:absolute;left:200px;top:891px;width:1px;height:18px;background:#d5d5d5"></div>
<svg style="left:210px;top:893px" width="17" height="15"><path d="M6 0V12M0 6H12" stroke="#555" stroke-width="1.6"/><path d="M11 12H17L14 15Z" fill="#6e6e6e"/></svg>
<div style="position:absolute;left:59px;top:914px;width:300px;height:83px;background:#fff"></div>
<div style="position:absolute;left:59px;top:956px;width:300px;height:20px;background:#d5d5d5"></div>
<div style="position:absolute;left:349px;top:914px;width:10px;height:83px;background:#f0f0f0"></div>
<div style="position:absolute;left:349px;top:956px;width:10px;height:15px;background:#d0d0d0"></div>
<svg style="left:62px;top:922px" width="10" height="8"><path d="M0 0H10L5 7.5Z" fill="#a9a9a9"/></svg>
<svg style="left:80px;top:918px" width="17" height="16"><path d="M0 10C1 4 6 1 14 1C13 8 9 12 3 12Z" fill="#72b872"/><circle cx="11" cy="11" r="4" fill="#fff" stroke="#7b8794" stroke-width="1.2"/><circle cx="11" cy="11" r="1.8" fill="none" stroke="#7b8794" stroke-width="1"/></svg>
<div class="t" style="left:99px;top:916px;font-size:13.2px;color:#000">Spring Boot</div>
<svg style="left:80px;top:942px" width="10" height="8"><path d="M0 0H10L5 7.5Z" fill="#a9a9a9"/></svg>
<svg style="left:101px;top:940px" width="10" height="12"><path d="M0 0L10 6L0 12Z" fill="#3fa14a"/></svg>
<div class="t" style="left:116px;top:936px;font-size:13.2px;color:#000">Running</div>
<svg style="left:117px;top:959px" width="13" height="14"><ellipse cx="6.5" cy="7.5" rx="4" ry="5" fill="#4fae5a"/><path d="M0 4H13M0 8H13M1 12H12M4 1L5 3M9 1L8 3" stroke="#4fae5a" stroke-width="1.5"/><path d="M4 6H9M4 9H9" stroke="#d5d5d5" stroke-width="1"/></svg>
<div class="t" style="left:134px;top:956px;font-size:13px;font-weight:bold;color:#000">DemoBootApplication-test</div>
<svg style="left:80px;top:982px" width="10" height="8"><path d="M0 0H10L5 7.5Z" fill="#a9a9a9"/></svg>
<svg style="left:99px;top:979px" width="13" height="15"><path d="M10 4A5 5 0 1 0 11 9" stroke="#3fa14a" stroke-width="2" fill="none"/><path d="M7 1L12 4L8 7Z" fill="#3fa14a"/><rect x="7" y="9" width="6" height="6" fill="#555"/></svg>
<div class="t" style="left:116px;top:976px;font-size:13.2px;color:#000">Finished</div>
<div style="position:absolute;left:359px;top:887px;width:1px;height:110px;background:#d1d1d1"></div>
<div class="t" style="left:373px;top:891px;font-size:12px;letter-spacing:-0.3px;color:#000">Debugger</div>
<div style="position:absolute;left:360px;top:911px;width:78px;height:3px;background:#8d9bb3"></div>
<svg style="left:450px;top:893px" width="15" height="15"><rect x="0" y="0" width="13" height="12" fill="#5e6670"/><path d="M3 3L6 6L3 9" stroke="#fff" stroke-width="1.4" fill="none"/><circle cx="11" cy="11" r="3.5" fill="#f0a030"/><path d="M11 9V12.5M9.5 11L11 12.5L12.5 11" stroke="#fff" stroke-width="1" fill="none"/></svg>
<div class="t" style="left:469px;top:891px;font-size:12px;letter-spacing:-0.5px;color:#000">Console</div>
<svg style="left:530px;top:892px" width="17" height="16"><path d="M3 13L8 3L13 13" stroke="#e79a6a" stroke-width="1.5" fill="none"/><circle cx="8" cy="3" r="2.5" fill="#f0905a"/><circle cx="3" cy="13" r="2.5" fill="#f0905a"/><circle cx="14" cy="13" r="2.5" fill="#f0905a"/></svg>
<div class="t" style="left:551px;top:891px;font-size:12px;letter-spacing:-0.2px;color:#000">Endpoints</div>
<svg style="left:618px;top:894px" width="14" height="12"><path d="M0 1.5H14M0 6H14M0 10.5H14" stroke="#3d8fdb" stroke-width="2"/></svg>
<div style="position:absolute;left:641px;top:890px;width:1px;height:20px;background:#d5d5d5"></div>
<svg style="left:650px;top:893px" width="15" height="15"><path d="M1 8C3 3 9 2 12 6" stroke="#3d8fdb" stroke-width="1.6" fill="none"/><path d="M9 6H14V1" stroke="#3d8fdb" stroke-width="1.6" fill="none"/><path d="M1 13H14" stroke="#555" stroke-width="1.6"/></svg>
<svg style="left:677px;top:892px" width="14" height="16"><path d="M7 1V11M3 7L7 11L11 7" stroke="#3d8fdb" stroke-width="1.8" fill="none"/><path d="M1 14.5H13" stroke="#555" stroke-width="1.6"/></svg>
<svg style="left:703px;top:892px" width="14" height="16"><path d="M7 1V11M3 7L7 11L11 7" stroke="#e0535a" stroke-width="1.8" fill="none"/><path d="M1 14.5H13" stroke="#555" stroke-width="1.6"/></svg>
<svg style="left:729px;top:892px" width="14" height="16"><path d="M7 12V2M3 6L7 2L11 6" stroke="#3d8fdb" stroke-width="1.8" fill="none"/><path d="M1 14.5H13" stroke="#555" stroke-width="1.6"/></svg>
<svg style="left:755px;top:892px" width="15" height="16"><path d="M1 1L6 6M6 1L1 6" stroke="#e0535a" stroke-width="1.6"/><path d="M6 8H13V15H6" stroke="#555" stroke-width="1.5" fill="none"/><path d="M9 5H13V8" stroke="#555" stroke-width="1.5" fill="none"/></svg>
<svg style="left:781px;top:892px" width="16" height="17"><path d="M1 1L9 9M4 9H9V4" stroke="#3d8fdb" stroke-width="1.8" fill="none"/><path d="M11 8H15M13 8V16M11 16H15" stroke="#555" stroke-width="1"/></svg>
<div style="position:absolute;left:804px;top:890px;width:1px;height:20px;background:#d5d5d5"></div>
<svg style="left:814px;top:893px" width="14" height="14"><rect x="0.5" y="0.5" width="13" height="13" fill="none" stroke="#555" stroke-width="1.3"/><path d="M0 4.5H14M4.7 4.5V14M9.3 4.5V14M0 9.2H14" stroke="#555" stroke-width="1.3"/></svg>
<svg style="left:840px;top:894px" width="14" height="12"><path d="M0 1H5M9 1H14M0 6H14M0 11H5M9 11H14M5 1L9 11" stroke="#c4c4c4" stroke-width="1.3" fill="none"/></svg>
<svg style="left:1885px;top:894px" width="16" height="14"><rect x="0" y="0" width="7" height="5" fill="#555"/><rect x="8" y="0" width="7" height="5" fill="#555"/><rect x="0" y="6" width="15" height="4" fill="#555"/><path d="M10 11H16L13 14Z" fill="#555"/></svg>
<div style="position:absolute;left:359px;top:914px;width:1548px;height:1px;background:#d1d1d1"></div>
<div class="t" style="left:373px;top:919px;font-size:11.5px;letter-spacing:-0.4px;color:#000">Frames</div>
<div style="position:absolute;left:360px;top:939px;width:63px;height:3px;background:#8d9bb3"></div>
<div class="t" style="left:435px;top:919px;font-size:12px;letter-spacing:-0.4px;color:#000">Threads</div>
<div style="position:absolute;left:359px;top:941px;width:518px;height:1px;background:#d1d1d1"></div>
<div style="position:absolute;left:877px;top:914px;width:1px;height:83px;background:#d1d1d1"></div>
<div style="position:absolute;left:363px;top:946px;width:428px;height:23px;background:#fff;border:1px solid #c9c9c9;border-radius:3px"></div>
<svg style="left:370px;top:951px" width="14" height="12"><path d="M1 6L5 10L13 1" stroke="#f07848" stroke-width="2.4" fill="none"/></svg>
<div class="t" style="left:390px;top:948px;font-size:13.2px;color:#000">"main"@1 in group "main": RUNNING</div>
<svg style="left:775px;top:955px" width="11" height="6"><path d="M0 0H11L5.5 6Z" fill="#555"/></svg>
<svg style="left:804px;top:950px" width="12" height="15"><path d="M6 15V2M1 6.5L6 1.5L11 6.5" stroke="#555" stroke-width="1.7" fill="none"/></svg>
<svg style="left:830px;top:950px" width="12" height="15"><path d="M6 0V13M1 8.5L6 13.5L11 8.5" stroke="#555" stroke-width="1.7" fill="none"/></svg>
<svg style="left:855px;top:950px" width="13" height="14"><path d="M0 0H13L8 6V14L5 12V6Z" fill="#555"/></svg>
<div style="position:absolute;left:360px;top:971px;width:517px;height:26px;background:#fff"></div>
<div style="position:absolute;left:360px;top:972px;width:517px;height:1px;background:#e8e8e8"></div>
<div class="t" style="left:376px;top:975px;font-size:13px;color:#000">contextLoaded:38, HopeApplicationRunListener <span style="font-style:italic;color:#8c8c8c">(org.hopehomi.core.launch.config)</span></div>
<div style="position:absolute;left:360px;top:991px;width:430px;height:6px;background:#e6e6e6"></div>
<div class="t" style="left:891px;top:919px;font-size:12px;letter-spacing:-0.3px;color:#000">Variables</div>
<div style="position:absolute;left:877px;top:941px;width:981px;height:1px;background:#d1d1d1"></div>
<svg style="left:883px;top:949px" width="12" height="12"><path d="M6 0V12M0 6H12" stroke="#555" stroke-width="1.7"/></svg>
<div class="t" style="left:886px;top:979px;font-size:11px;letter-spacing:-1px;color:#777">››</div>
<div style="position:absolute;left:902px;top:942px;width:1px;height:55px;background:#d1d1d1"></div>
<div style="position:absolute;left:903px;top:942px;width:955px;height:55px;background:#fff"></div>
<div style="position:absolute;left:903px;top:988px;width:228px;height:9px;background:#e8e8e8"></div>
<div style="position:absolute;left:1848px;top:942px;width:10px;height:28px;background:#e3e3e3"></div>
<svg style="left:906px;top:947px" width="8" height="10"><path d="M0 0L7.5 5L0 10Z" fill="#a9a9a9"/></svg>
<svg style="left:906px;top:967px" width="8" height="10"><path d="M0 0L7.5 5L0 10Z" fill="#a9a9a9"/></svg>
<svg style="left:906px;top:987px" width="8" height="10"><path d="M0 0L7.5 5L0 10Z" fill="#a9a9a9"/></svg>
<svg style="left:925px;top:946px" width="12" height="12"><rect x="0" y="0" width="11" height="3" fill="#f0b860"/><rect x="0" y="4.5" width="11" height="3" fill="#f0b860"/><rect x="0" y="9" width="11" height="3" fill="#f0b860"/></svg>
<div class="t" style="left:942px;top:942px;font-size:13.2px;color:#000"><span style="color:#871b1b">this</span> = <span style="color:#8c8c8c">{SpringApplication@1869}</span></div>
<div style="position:absolute;left:924px;top:965px;width:14px;height:14px;border-radius:50%;background:#f6c27a;color:#7a5a2a;font:10px 'Liberation Sans';line-height:14px;text-align:center">p</div>
<div class="t" style="left:942px;top:962px;font-size:13.2px;color:#000"><span style="color:#871b1b">bootstrapContext</span> = <span style="color:#8c8c8c">{DefaultBootstrapContext@1917}</span></div>
<div style="position:absolute;left:924px;top:985px;width:14px;height:14px;border-radius:50%;background:#f6c27a;color:#7a5a2a;font:10px 'Liberation Sans';line-height:14px;text-align:center">p</div>
<div class="t" style="left:942px;top:982px;font-size:13px;color:#000;width:871px;overflow:hidden;height:15px"><span style="color:#871b1b">context</span> = <span style="color:#8c8c8c">{AnnotationConfigServletWebServerApplicationContext@3841}</span> "org.springframework.boot.web.servlet.context.AnnotationConfigServletWebS</div>
<div class="t" style="left:1813px;top:982px;font-size:13px;letter-spacing:-0.3px;color:#000"><span style="color:#8c8c8c">...</span> <span style="color:#5a9be6">View</span></div>
<div style="position:absolute;left:1858px;top:914px;width:1px;height:83px;background:#d1d1d1"></div>
<div class="t" style="left:1872px;top:919px;font-size:12.5px;color:#000;width:8px;overflow:hidden">M</div>
<div style="position:absolute;left:1859px;top:939px;width:20px;height:2px;background:#8d9bb3"></div>
<svg style="left:1887px;top:924px" width="12" height="7"><path d="M1 1L6 6L11 1" stroke="#555" stroke-width="1.4" fill="none"/></svg>
<div style="position:absolute;left:1859px;top:942px;width:48px;height:29px;background:#f2f2f2"></div>
<div style="position:absolute;left:1862px;top:946px;width:15px;height:23px;background:#fff;border:1px solid #c9c9c9;border-radius:3px"></div>
<div class="t" style="left:1869px;top:948px;font-size:12px;color:#aaa;width:8px;overflow:hidden">C</div>
<svg style="left:1886px;top:950px" width="14" height="14" viewBox="0 0 14 14"><path d="M6 0H8L8.4 2.1L9.9 2.7L11.6 1.5L13 2.9L11.8 4.6L12.4 6.1L14 6.5V8L12.4 8.4L11.8 9.9L13 11.6L11.6 13L9.9 11.8L8.4 12.4L8 14H6L5.6 12.4L4.1 11.8L2.4 13L1 11.6L2.2 9.9L1.6 8.4L0 8V6L1.6 5.6L2.2 4.1L1 2.4L2.4 1L4.1 2.2L5.6 1.6Z" fill="#555"/><circle cx="7" cy="7" r="2.3" fill="#f2f2f2"/></svg>
<div style="position:absolute;left:1859px;top:971px;width:48px;height:26px;background:#fff"></div>
<div class="t" style="left:1867px;top:974px;font-size:12px;color:#000">..</div>
<div style="position:absolute;left:1873px;top:975px;width:1px;height:22px;background:#d5d5d5"></div>
<div class="t" style="left:1882px;top:975px;font-size:13px;color:#000;width:25px;overflow:hidden">Cou</div>
<div style="position:absolute;left:308px;top:998px;width:93px;height:22px;background:#c9c9c9"></div>
<svg style="left:40px;top:1003px" width="12" height="13"><path d="M2 13V1M2 1L0 3M9 6V11H2M9 6L6 3M9 6L12 3" stroke="#555" stroke-width="1.6" fill="none"/></svg>
<div class="t" style="left:56px;top:1000px;font-size:12px;letter-spacing:-0.5px;color:#000"><u>9</u>: Git</div>
<svg style="left:104px;top:1004px" width="12" height="11"><path d="M0 1H2M4 1H12M0 5.5H2M4 5.5H12M0 10H2M4 10H12" stroke="#555" stroke-width="1.5"/></svg>
<div class="t" style="left:120px;top:1000px;font-size:12px;letter-spacing:-0.5px;color:#000"><u>6</u>: TODO</div>
<svg style="left:184px;top:1002px" width="14" height="14"><path d="M1 4L5 0L8 3L4 7Z" fill="#555"/><path d="M5 4L13 13" stroke="#555" stroke-width="2.2"/></svg>
<div class="t" style="left:201px;top:1000px;font-size:12px;letter-spacing:-0.5px;color:#000">Build</div>
<svg style="left:248px;top:1003px" width="13" height="12"><path d="M0 9C1 4 6 0.5 13 0.5C12 7 8 11 2 11Z" fill="#777"/></svg>
<div class="t" style="left:265px;top:1000px;font-size:12px;letter-spacing:-0.5px;color:#000">Spring</div>
<svg style="left:320px;top:1002px" width="15" height="15"><path d="M3 1H10L13 7L10 13H3L0 7Z" fill="#666"/><path d="M5 4L10 7L5 10Z" fill="#c9c9c9"/><circle cx="12" cy="12.5" r="2.5" fill="#27c93f"/></svg>
<div class="t" style="left:337px;top:1000px;font-size:12px;letter-spacing:-0.5px;color:#000"><u>8</u>: Services</div>
<svg style="left:412px;top:1003px" width="12" height="12"><rect x="0" y="0" width="12" height="12" fill="#666"/><path d="M2.5 3L5.5 6L2.5 9" stroke="#fff" stroke-width="1.3" fill="none"/></svg>
<div class="t" style="left:429px;top:1000px;font-size:12px;letter-spacing:-0.5px;color:#000">Terminal</div>
<svg style="left:497px;top:1002px" width="13" height="14"><rect x="0" y="0" width="10" height="11" fill="none" stroke="#666" stroke-width="1.4"/><rect x="4" y="5" width="9" height="9" fill="#666"/><path d="M6 8H11M6 11H11M8.5 6V13" stroke="#f2f2f2" stroke-width="0.8"/></svg>
<div class="t" style="left:513px;top:1000px;font-size:12px;letter-spacing:-0.5px;color:#000">Java Enterprise</div>
<div style="position:absolute;left:1828px;top:1003px;width:13px;height:13px;border-radius:50%;background:#5aab5a;color:#fff;font:bold 10px 'Liberation Sans';line-height:13px;text-align:center">4</div>
<div class="t" style="left:1845px;top:1000px;font-size:12px;letter-spacing:-0.3px;color:#000">Event Log</div>
<svg style="left:13px;top:1024px" width="13" height="13"><rect x="3.5" y="0.5" width="9" height="9" fill="#f2f2f2" stroke="#666"/><path d="M0.5 3.5V12.5H9.5" stroke="#666" fill="none"/></svg>
<div class="t" style="left:35px;top:1020px;font-size:13.2px;color:#000">All files are up-to-date (21 minutes ago)</div>
<div class="t" style="left:1556px;top:1020px;font-size:12.6px;color:#000">13 chars</div>
<div class="t" style="left:1625px;top:1020px;font-size:13px;color:#000">401:32</div>
<div class="t" style="left:1675px;top:1020px;font-size:13px;color:#8c8c8c">LF</div>
<div class="t" style="left:1699px;top:1020px;font-size:13px;color:#8c8c8c">UTF-8</div>
<div class="t" style="left:1745px;top:1020px;font-size:12.6px;color:#8c8c8c">4 spaces</div>
<svg style="left:1810px;top:1023px" width="12" height="14"><path d="M3 0V14M3 8C3 5 9 7 9 3" stroke="#555" stroke-width="1.5" fill="none"/><circle cx="9" cy="3" r="2" fill="#555"/></svg>
<div class="t" style="left:1826px;top:1020px;font-size:13px;color:#000">dev</div>
<svg style="left:1858px;top:1023px" width="14" height="14"><rect x="1" y="6" width="12" height="8" fill="#777"/><path d="M3.5 6V4A3.5 3.5 0 0 1 10.5 4V6" stroke="#777" stroke-width="1.5" fill="none"/></svg>
<svg style="left:1883px;top:1023px" width="14" height="14"><rect x="1" y="1" width="12" height="9" fill="#888"/><rect x="4" y="10" width="6" height="4" fill="#888"/></svg>
<div style="position:absolute;left:1906px;top:1022px;width:16px;height:16px;border-radius:50%;background:#bdbdbd;opacity:.8"></div>
<div style="position:absolute;left:1805px;top:1021px;font-size:14px;letter-spacing:-0.6px;line-height:22px;color:rgba(120,120,120,.55);white-space:pre">CSDN @Ladison7</div>
<div style="position:absolute;left:1823px;top:1043px;font:bold 11px 'Liberation Sans';line-height:14px;color:#ddd;white-space:pre">10:17</div></body></html>
